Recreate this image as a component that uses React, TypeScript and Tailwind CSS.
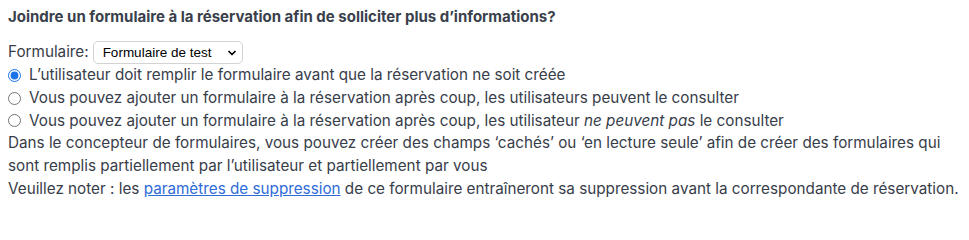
import { ChevronDown } from 'lucide-react'

export default function App() {
  return (
    <div className="min-h-[213px] bg-white px-[8px] pt-[6px] font-['Inter','Liberation_Sans',Arial,sans-serif] text-[15.25px] leading-[22.8px] text-[#383d4a]">
      <h4 className="mb-[13px] text-[15px] font-bold leading-[22px] text-[#3a3f4c]">
        Joindre un formulaire à la réservation afin de solliciter plus d’informations?
      </h4>

      <div className="flex items-center gap-[4px]">
        <span>Formulaire:</span>
        <div className="relative">
          <select
            defaultValue="test"
            className="h-[23px] w-[150px] appearance-none rounded-[5px] border border-[#d3d3d3] bg-white pl-[9px] font-['Liberation_Sans',Arial,sans-serif] text-[13.5px] leading-[21px] text-black"
          >
            <option value="test">Formulaire de test</option>
          </select>
          <ChevronDown
            className="pointer-events-none absolute right-[5px] top-[6px] h-[12px] w-[12px] text-black"
            strokeWidth={3.5}
          />
        </div>
      </div>

      <div className="flex flex-col">
        <label className="flex items-center gap-[8px]">
          <input type="radio" name="mode" defaultChecked className="h-[13px] w-[13px] accent-[#1a73e8]" />
          <span>L’utilisateur doit remplir le formulaire avant que la réservation ne soit créée</span>
        </label>
        <label className="flex items-center gap-[8px]">
          <input type="radio" name="mode" className="h-[13px] w-[13px]" />
          <span>
            Vous pouvez ajouter un formulaire à la réservation après coup, les utilisateurs peuvent le consulter
          </span>
        </label>
        <label className="flex items-center gap-[8px]">
          <input type="radio" name="mode" className="h-[13px] w-[13px]" />
          <span>
            Vous pouvez ajouter un formulaire à la réservation après coup, les utilisateur{' '}
            <em>ne peuvent pas</em> le consulter
          </span>
        </label>
      </div>

      <p>
        Dans le concepteur de formulaires, vous pouvez créer des champs ‘cachés’ ou ‘en lecture seule’ afin de créer
        des formulaires qui sont remplis partiellement par l’utilisateur et partiellement par vous
      </p>
      <p>
        Veuillez noter : les{' '}
        <a href="#" className="text-[#2f6bd8] underline">
          paramètres de suppression
        </a>{' '}
        de ce formulaire entraîneront sa suppression avant la correspondante de réservation.
      </p>
    </div>
  )
}
